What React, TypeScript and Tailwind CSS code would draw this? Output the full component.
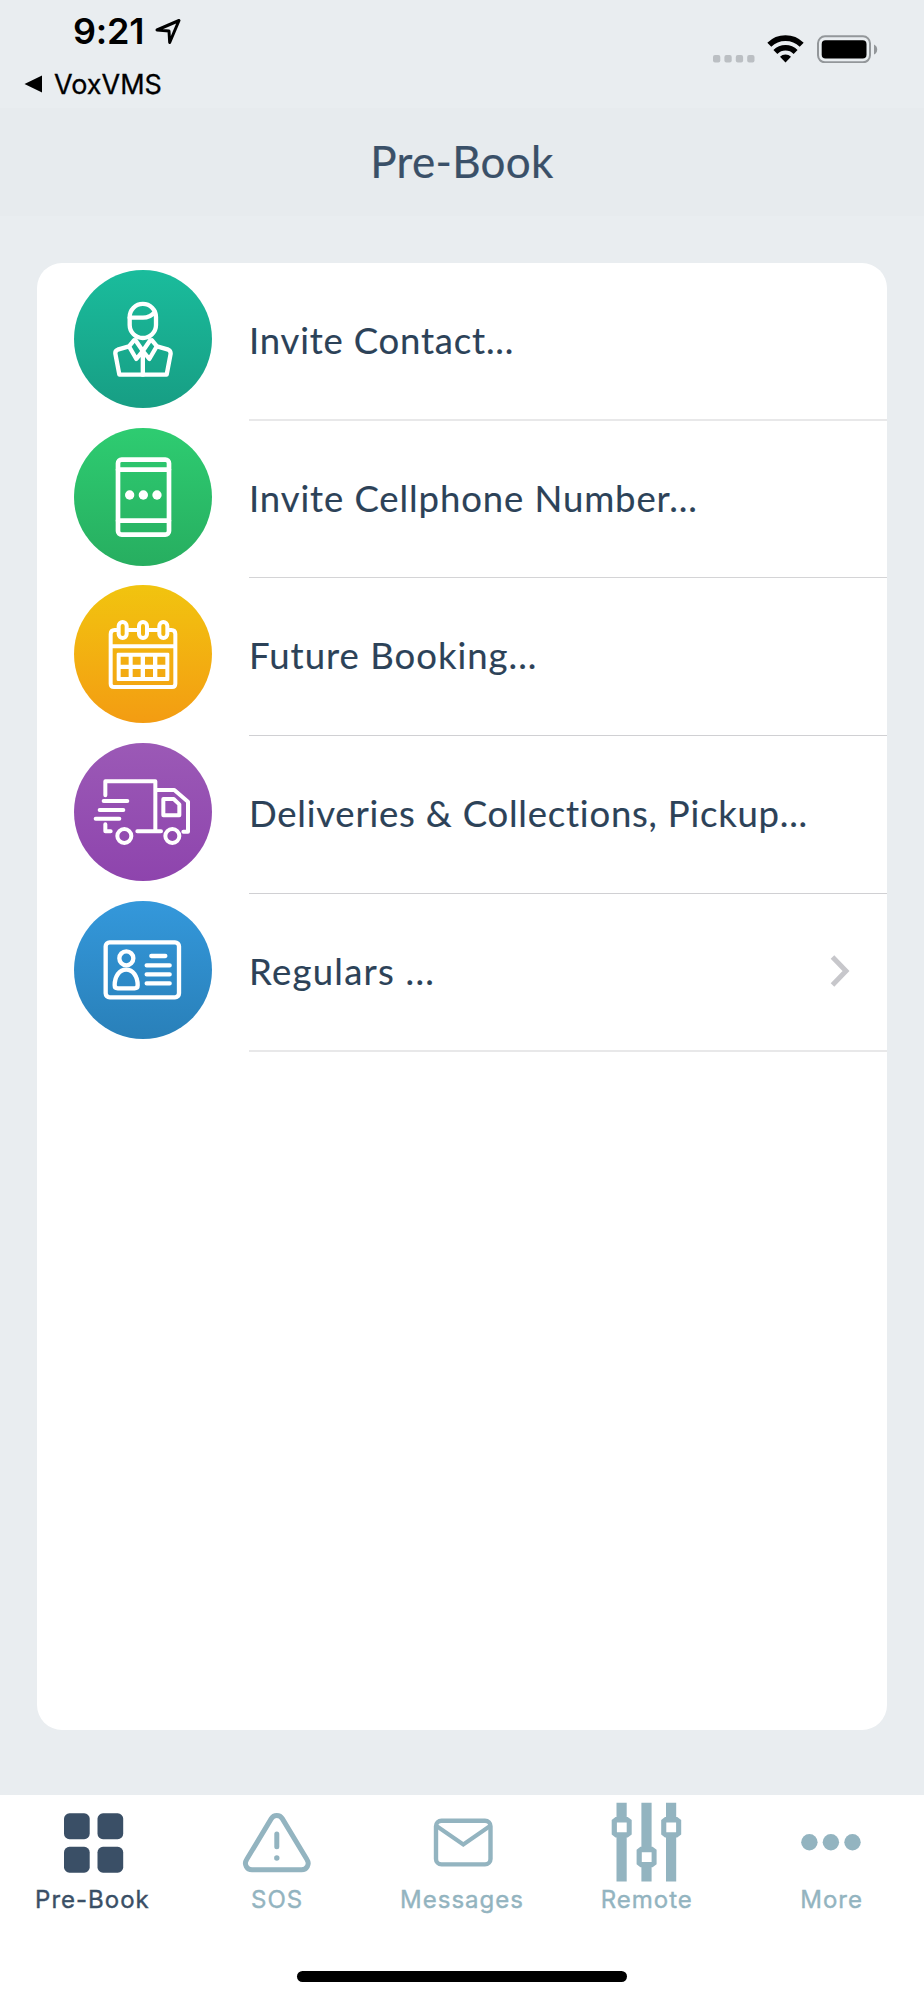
import type { ReactNode } from 'react'

type Entry = {
  label: string
  gradient: string
  icon: ReactNode
  height: string
  divider: string
  tracking: string
  chevron?: boolean
}

const entries: Entry[] = [
  {
    label: 'Invite Contact...',
    gradient: 'from-[#1abc9c] to-[#179e84]',
    height: 'h-[158px]',
    divider: 'border-b-2 border-[#e8e8e9]',
    tracking: 'tracking-[0.8px]',
    icon: (
      <g strokeWidth="13">
        <path d="M167 141a39.5 39.5 0 0 1 79 0v24c0 22-18 39-39.500 39s-39.500-17-39.500-39z" />
        <path d="M167 143h40q21 0 36-17" />
        <path d="M180 211l-15 18-34 10q-8 3-7 12l12 63h142l12-63q0-9-7-12l-34-10-15-18" />
        <path d="M166 231l21 36 19.500-24-22-32M247 231l-21 36-19.500-24 22-32M206.500 245v69" />
      </g>
    ),
  },
  {
    label: 'Invite Cellphone Number...',
    gradient: 'from-[#2ecc71] to-[#27ae60]',
    height: 'h-[157px]',
    divider: 'border-b border-[#d4d4d6]',
    tracking: 'tracking-[0.9px]',
    icon: (
      <g strokeWidth="14">
        <rect x="132" y="95" width="153" height="225" rx="11" />
        <path d="M132 125h153M132 278h153" />
        <g fill="white" stroke="none">
          <circle cx="167" cy="201" r="14" />
          <circle cx="208" cy="201" r="14" />
          <circle cx="249" cy="201" r="14" />
        </g>
      </g>
    ),
  },
  {
    label: 'Future Booking...',
    gradient: 'from-[#f1c40f] to-[#f39c12]',
    height: 'h-[158px]',
    divider: 'border-b border-[#d0d0d3]',
    tracking: 'tracking-[1px]',
    icon: (
      <g strokeWidth="12">
        <path d="M130 135h-8q-12 0-12 12v149q0 10 10 10h174q10 0 10-10v-149q0-12-12-12h-8M164 135h25M225 135h25M110 184h194" />
        <rect x="134" y="111" width="24" height="48" rx="12" />
        <rect x="195" y="111" width="24" height="48" rx="12" />
        <rect x="256" y="111" width="24" height="48" rx="12" />
        <path
          fill="white"
          stroke="none"
          fillRule="evenodd"
          d="M132 203h150q4 0 4 4v77q0 4-4 4h-150q-4 0-4-4v-77q0-4 4-4zM140 215v24h24v-24zM176 215v24h24v-24zM213 215v24h24v-24zM250 215v24h24v-24zM140 252v24h24v-24zM176 252v24h24v-24zM213 252v24h24v-24zM250 252v24h24v-24z"
        />
      </g>
    ),
  },
  {
    label: 'Deliveries & Collections, Pickup...',
    gradient: 'from-[#9b59b6] to-[#8e44ad]',
    height: 'h-[158px]',
    divider: 'border-b border-[#d0d0d3]',
    tracking: 'tracking-[0.78px]',
    icon: (
      <g strokeWidth="12">
        <path d="M94 157v-42h150v149M250 141h51l41 35v90h-14M94 244v21h16M190 265h71" />
        <path d="M268 168h31l17 16v33h-48z" />
        <path d="M89 174h71M77 201h71M65 227h71" />
        <circle cx="151" cy="279" r="21" />
        <circle cx="295" cy="279" r="21" />
      </g>
    ),
  },
  {
    label: 'Regulars ...',
    gradient: 'from-[#3498db] to-[#2980b9]',
    height: 'h-[158px]',
    divider: 'border-b-2 border-[#e8e8e9]',
    tracking: 'tracking-[1.25px]',
    chevron: true,
    icon: (
      <g strokeWidth="13">
        <rect x="95" y="124" width="220" height="165" rx="12" />
        <circle cx="157" cy="172" r="21" />
        <path d="M122 253c0-27 14-47 34.500-47s34.500 20 34.500 47q0 9-9 9h-51q-9 0-9-9z" />
        <path d="M232 165h42M218 193h69M218 220h69M218 247h69" />
      </g>
    ),
  },
]

const tabs = [
  {
    label: 'Pre-Book',
    color: 'text-[#3a4f66]',
    icon: (
      <g fill="currentColor">
        <rect x="16" y="18.300" width="25.700" height="25.900" rx="5.500" />
        <rect x="49.500" y="18.300" width="25.700" height="25.900" rx="5.500" />
        <rect x="16" y="51.800" width="25.700" height="25.900" rx="5.500" />
        <rect x="49.500" y="51.800" width="25.700" height="25.900" rx="5.500" />
      </g>
    ),
  },
  {
    label: 'SOS',
    color: 'text-[#93b4c0]',
    icon: (
      <g fill="none" stroke="currentColor" strokeWidth="5" strokeLinecap="round">
        <path d="M38.300 23.600L13.500 64.800a6.500 6.500 0 0 0 5.500 10H68.600a6.500 6.500 0 0 0 5.500-10L49.300 23.600a6.400 6.400 0 0 0-11 0z" />
        <path d="M43.800 39v12.800" />
        <circle cx="43.800" cy="63" r="2.700" fill="currentColor" stroke="none" />
      </g>
    ),
  },
  {
    label: 'Messages',
    color: 'text-[#93b4c0]',
    icon: (
      <g fill="none" stroke="currentColor" strokeWidth="4.400">
        <rect x="18" y="25.700" width="54.500" height="43.700" rx="5.500" />
        <path d="M18.500 31l26.800 18.500L72 31" strokeWidth="4" />
      </g>
    ),
  },
  {
    label: 'Remote',
    color: 'text-[#93b4c0]',
    icon: (
      <g fill="currentColor">
        <path d="M13.500 7.700h10.200v78.800h-10.200zM38.400 7.700h10.200v78.800h-10.200zM63 7.700h10.200v78.800h-10.200z" />
        <path d="M12.500 22h12.200l4 3v14.500l-4 3h-12.200l-3.800-3v-14.500zM37.400 51.800h12.200l4 3v14.500l-4 3h-12.200l-3.800-3v-14.500zM62 22h12.200l4 3v14.500l-4 3h-12.200l-3.800-3v-14.500z" />
        <path fill="white" d="M13.900 27.400h9.800v9.900h-9.800zM38.800 57.200h9.800v9.900h-9.800zM63.300 27.400h9.800v9.900h-9.800z" />
      </g>
    ),
  },
  {
    label: 'More',
    color: 'text-[#93b4c0]',
    icon: (
      <g fill="currentColor">
        <circle cx="21.400" cy="47.200" r="8.200" />
        <circle cx="42.900" cy="47.200" r="8.200" />
        <circle cx="64.500" cy="47.200" r="8.200" />
      </g>
    ),
  },
]

function StatusBar() {
  return (
    <div className="flex h-[108px] justify-between pr-[46px] pl-6 text-black">
      <div className="flex flex-col">
        <div className="flex h-[62px] items-center gap-[11px] pl-[49px]">
          <span className="font-['Inter',sans-serif] text-[36px] leading-none font-semibold tracking-[-0.2px]">
            9:21
          </span>
          <svg width="26" height="26" viewBox="0 0 26 26" fill="none" stroke="currentColor" strokeWidth="3" strokeLinejoin="round">
            <path d="M2 12L24 2.500 14.700 24.500 14 13z" />
          </svg>
        </div>
        <div className="flex h-[44px] items-center gap-3">
          <svg width="18" height="18" viewBox="0 0 18 18" fill="currentColor">
            <path d="M.5 9L18 .5v17z" />
          </svg>
          <span className="font-['Inter',sans-serif] text-[27px] leading-none [-webkit-text-stroke:0.3px_#000]">
            VoxVMS
          </span>
        </div>
      </div>
      <div className="flex h-[28px] items-start pt-[35px]">
        <svg width="42" height="28" viewBox="0 0 42 28" fill="#bbbfc3">
          <rect x="0" y="20" width="7.300" height="7.600" rx="2" />
          <rect x="11.400" y="20" width="7.300" height="7.600" rx="2" />
          <rect x="22.800" y="20" width="7.300" height="7.600" rx="2" />
          <rect x="34.200" y="20" width="7.300" height="7.600" rx="2" />
        </svg>
        <svg className="ml-3" width="38" height="28" viewBox="0 0 38 28" fill="none" stroke="currentColor">
          <path d="M2.300 9.800a23 23 0 0 1 32.400 0" strokeWidth="5.600" />
          <path d="M8.400 16.900a14.300 14.300 0 0 1 20.200 0" strokeWidth="5.600" />
          <path d="M13 21.800a8 8 0 0 1 11 0L18.500 27.400z" fill="currentColor" stroke="none" />
        </svg>
        <svg className="ml-3" width="61" height="28" viewBox="0 0 61 28">
          <rect x="1" y="1.300" width="52" height="26" rx="7" fill="none" stroke="#93979a" strokeWidth="2" />
          <rect x="4.700" y="5.200" width="44.800" height="18.300" rx="3.800" fill="black" />
          <path d="M57 9.500q3.200 1.500 3.200 5t-3.200 5z" fill="#93979a" />
        </svg>
      </div>
    </div>
  )
}

export default function App() {
  return (
    <div className="flex h-[2000px] w-[924px] flex-col overflow-hidden bg-[#e9edf0]">
      <StatusBar />
      <header className="flex h-[108px] items-center justify-center bg-[#e7ebee] pb-[2px]">
        <h1 className="font-['Lato',sans-serif] text-[44px] leading-none tracking-[0.3px] text-[#3a5068] [-webkit-text-stroke:0.2px_#3a5068]">
          Pre-Book
        </h1>
      </header>

      <main className="mx-[37px] mt-[47px] h-[1467px] overflow-hidden rounded-[25px] bg-white">
        {entries.map((entry) => (
          <div key={entry.label} className={`flex ${entry.height} pl-[37px]`}>
            <div className={`mt-[7px] size-[138px] shrink-0 rounded-full bg-linear-to-b ${entry.gradient}`}>
              <svg
                width="138"
                height="138"
                viewBox="0 0 414 414"
                fill="none"
                stroke="white"
                strokeLinecap="round"
                strokeLinejoin="round"
              >
                {entry.icon}
              </svg>
            </div>
            <div className={`ml-[37px] flex flex-1 items-center justify-between pr-[35px] pb-[2px] ${entry.divider}`}>
              <span
                className={`font-['Lato',sans-serif] text-[36.5px] leading-none whitespace-nowrap text-[#2c4258] [-webkit-text-stroke:0.15px_#2c4258] ${entry.tracking}`}
              >
                {entry.label}
              </span>
              {entry.chevron && (
                <svg width="22" height="34" viewBox="0 0 22 34" fill="none" stroke="#c7c7cb" strokeWidth="5">
                  <path d="M2.500 3l13.500 14L2.500 31" />
                </svg>
              )}
            </div>
          </div>
        ))}
      </main>

      <footer className="mt-[65px] flex h-[205px] flex-col items-center bg-white">
        <nav className="grid h-[176px] w-full grid-cols-5">
          {tabs.map((tab) => (
            <div key={tab.label} className={`flex flex-col items-center ${tab.color}`}>
              <svg width="88" height="88" viewBox="0 0 88 88">
                {tab.icon}
              </svg>
              <span className="mt-[5px] font-['Inter',sans-serif] text-[24px] leading-6 tracking-[1px] [-webkit-text-stroke:0.4px_currentColor]">
                {tab.label}
              </span>
            </div>
          ))}
        </nav>
        <div className="h-[11px] w-[330px] rounded-full bg-black" />
      </footer>
    </div>
  )
}
